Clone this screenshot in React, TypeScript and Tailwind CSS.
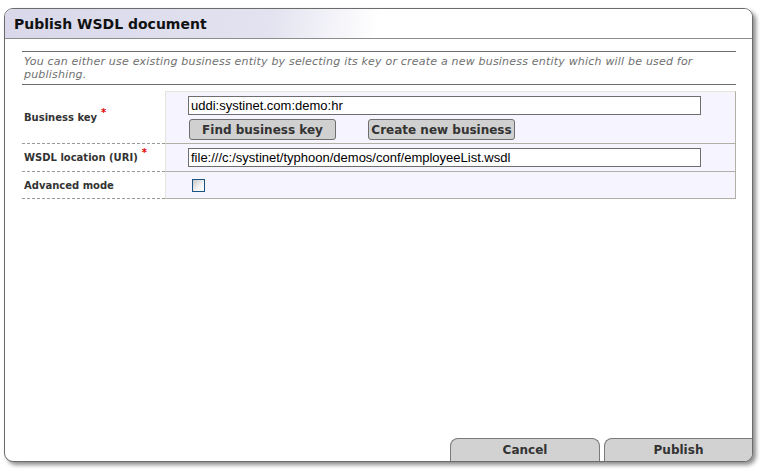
export default function App() {
  const font = { fontFamily: '"DejaVu Sans", Verdana, sans-serif' };

  return (
    <div className="w-[763px] h-[471px] bg-white overflow-hidden" style={font}>
      <div className="ml-[4px] mt-[8px] w-[749px] h-[454px] flex flex-col bg-white border border-[#6b6b6b] rounded-[9px] overflow-hidden shadow-[3px_3px_4px_rgba(0,0,0,0.45)]">
        {/* Title */}
        <div className="h-[30px] shrink-0 flex items-center pl-[9px] pt-[1px] border-b border-[#8c8c8c] bg-[linear-gradient(100deg,#d8d8ea_0%,#e2e2f0_35%,#ffffff_50%)]">
          <span className="text-[14px] font-bold text-[#111]">Publish WSDL document</span>
        </div>

        <div className="pl-[17px] pr-[16px] pt-[12px]">
          {/* Description */}
          <div className="border-t border-b border-[#6e6e6e] pt-[3px] pb-[3px] pl-[2px]">
            <p className="text-[11px] italic leading-[13px] tracking-[0.2px] text-[#707070]">
              You can either use existing business entity by selecting its key or create a new business entity which will be used for publishing.
            </p>
          </div>

          {/* Form */}
          <div className="mt-[6px]">
            <div className="flex">
              <div className="w-[143px] shrink-0 flex items-center pl-[2px] border-b border-dashed border-[#9a9a9a]">
                <Label text="Business key" />
              </div>
              <div className="flex-1 bg-[#f6f4ff] border border-t-[#e6e4dc] border-l-[#e6e4dc] border-r-[#b3afa5] border-b-[#b3afa5] pl-[22px] pt-[4px] pb-[3px]">
                <Input value="uddi:systinet.com:demo:hr" />
                <div className="flex gap-[32px] mt-[4px] ml-[1px]">
                  <Btn text="Find business key" />
                  <Btn text="Create new business" />
                </div>
              </div>
            </div>
            <div className="flex h-[28px]">
              <div className="w-[143px] shrink-0 flex items-center pl-[2px] border-b border-dashed border-[#9a9a9a]">
                <Label text="WSDL location (URI)" />
              </div>
              <div className="flex-1 flex items-center bg-[#f6f4ff] border-l border-l-[#e6e4dc] border-r border-b border-[#b3afa5] pl-[22px]">
                <Input value="file:///c:/systinet/typhoon/demos/conf/employeeList.wsdl" />
              </div>
            </div>
            <div className="flex h-[27px]">
              <div className="w-[143px] shrink-0 flex items-center pl-[2px] border-b border-dashed border-[#9a9a9a]">
                <span className="text-[10px] font-bold text-[#333]">Advanced mode</span>
              </div>
              <div className="flex-1 flex items-center bg-[#f6f4ff] border-l border-l-[#e6e4dc] border-r border-b border-[#b3afa5] pl-[26px]">
                <div className="w-[13px] h-[13px] border border-[#1c5282] bg-[linear-gradient(135deg,#c8c8c8_0%,#f4f4f4_60%,#ffffff_100%)]" />
              </div>
            </div>
          </div>
        </div>

        {/* Bottom tabs */}
        <div className="mt-auto flex justify-end gap-[4px]">
          <div className="w-[150px] h-[23px] flex items-center justify-center bg-[#d2d2d2] border-t border-l border-r border-[#7a7a7a] rounded-t-[8px] text-[12px] font-bold text-[#333]">
            Cancel
          </div>
          <div className="w-[148px] h-[23px] flex items-center justify-center bg-[#d2d2d2] border-t border-l border-[#7a7a7a] rounded-tl-[8px] text-[12px] font-bold text-[#333]">
            Publish
          </div>
        </div>
      </div>
    </div>
  );
}

function Label({ text }: { text: string }) {
  return (
    <span className="text-[10px] font-bold text-[#333]">
      {text}
      <span className="text-[#e00000] text-[10px] relative top-[-5px] ml-[4px]">*</span>
    </span>
  );
}

function Input({ value }: { value: string }) {
  return (
    <div className="w-[513px] h-[19px] shrink-0 bg-white border border-[#6e6e6e] flex items-center pl-[2px] text-[13px] text-black" style={{ fontFamily: '"Liberation Sans", Arial, sans-serif' }}>
      {value}
    </div>
  );
}

function Btn({ text }: { text: string }) {
  return (
    <div className="w-[147px] h-[21px] shrink-0 flex items-center justify-center bg-[#d0d0d0] border border-[#6e6e6e] rounded-[3px] text-[12px] font-bold text-[#333]">
      {text}
    </div>
  );
}
